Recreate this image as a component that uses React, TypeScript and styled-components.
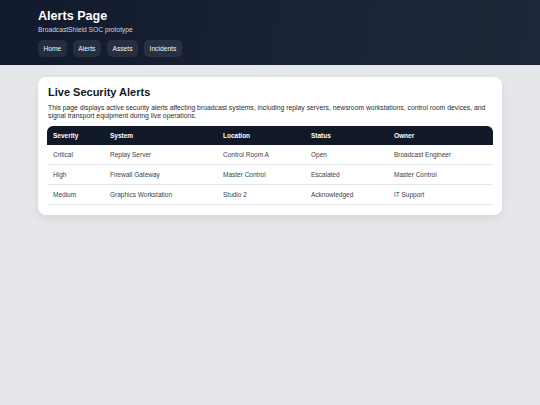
import styled, { createGlobalStyle } from 'styled-components';

const GlobalStyle = createGlobalStyle`
  html, body {
    margin: 0;
    padding: 0;
    background: #e5e7eb;
    font-family: "Liberation Sans", Arial, sans-serif;
  }
`;

const Page = styled.div`
  min-height: 405px;
  background: #e5e7eb;
`;

const Header = styled.header`
  height: 65px;
  box-sizing: border-box;
  padding: 8px 38px 0;
  background: linear-gradient(100deg, #111a2c 0%, #1a2437 60%, #1e2738 100%);
  color: #ffffff;
`;

const Title = styled.h1`
  margin: 0;
  font-size: 12.6px;
  line-height: 16px;
  font-weight: 700;
`;

const Subtitle = styled.p`
  margin: 1px 0 0;
  font-size: 6.7px;
  line-height: 9px;
  color: #d1d5db;
`;

const Nav = styled.nav`
  display: flex;
  gap: 6px;
  margin-top: 6px;
`;

const NavButton = styled.a`
  display: inline-flex;
  align-items: center;
  height: 17px;
  padding: 0 5.5px;
  border-radius: 5px;
  background: rgba(255, 255, 255, 0.08);
  color: #f3f4f6;
  font-size: 6.7px;
  text-decoration: none;
`;

const Main = styled.main`
  padding: 12px 38px;
`;

const Card = styled.section`
  background: #ffffff;
  border-radius: 8px;
  padding: 8px 9px 10px;
  box-shadow: 0 3px 10px rgba(0, 0, 0, 0.08);
`;

const CardTitle = styled.h2`
  margin: 0 0 0 1px;
  font-size: 11px;
  line-height: 14px;
  font-weight: 700;
  color: #111827;
`;

const Description = styled.p`
  margin: 5px 0 7px 1px;
  font-size: 6.8px;
  line-height: 7.5px;
  color: #2d2d2d;
`;

const Table = styled.table`
  width: 100%;
  table-layout: fixed;
  border-collapse: separate;
  border-spacing: 0;
  font-size: 6.5px;
`;

const Th = styled.th<{ $w: number }>`
  width: ${(p) => p.$w}px;
  height: 19px;
  padding: 0 6px;
  text-align: left;
  font-weight: 700;
  color: #ffffff;
  background: #111827;

  &:first-child {
    border-top-left-radius: 6px;
  }
  &:last-child {
    border-top-right-radius: 6px;
  }
`;

const Td = styled.td`
  height: 19px;
  padding: 0 6px;
  color: #3a3f47;
  border-bottom: 1px solid #e5e7eb;
  white-space: nowrap;
`;

// content widths; each cell adds 12px of padding
const columns = [
  { label: 'Severity', w: 45 },
  { label: 'System', w: 101 },
  { label: 'Location', w: 76 },
  { label: 'Status', w: 71 },
  { label: 'Owner', w: 93 },
];

const alerts = [
  ['Critical', 'Replay Server', 'Control Room A', 'Open', 'Broadcast Engineer'],
  ['High', 'Firewall Gateway', 'Master Control', 'Escalated', 'Master Control'],
  ['Medium', 'Graphics Workstation', 'Studio 2', 'Acknowledged', 'IT Support'],
];

export default function App() {
  return (
    <Page>
      <GlobalStyle />
      <Header>
        <Title>Alerts Page</Title>
        <Subtitle>BroadcastShield SOC prototype</Subtitle>
        <Nav>
          <NavButton>Home</NavButton>
          <NavButton>Alerts</NavButton>
          <NavButton>Assets</NavButton>
          <NavButton>Incidents</NavButton>
        </Nav>
      </Header>
      <Main>
        <Card>
          <CardTitle>Live Security Alerts</CardTitle>
          <Description>
            This page displays active security alerts affecting broadcast systems, including replay servers,
            newsroom workstations, control room devices, and signal transport equipment during live operations.
          </Description>
          <Table>
            <thead>
              <tr>
                {columns.map((c) => (
                  <Th key={c.label} $w={c.w}>{c.label}</Th>
                ))}
              </tr>
            </thead>
            <tbody>
              {alerts.map((row) => (
                <tr key={row[1]}>
                  {row.map((cell, i) => (
                    <Td key={i}>{cell}</Td>
                  ))}
                </tr>
              ))}
            </tbody>
          </Table>
        </Card>
      </Main>
    </Page>
  );
}
